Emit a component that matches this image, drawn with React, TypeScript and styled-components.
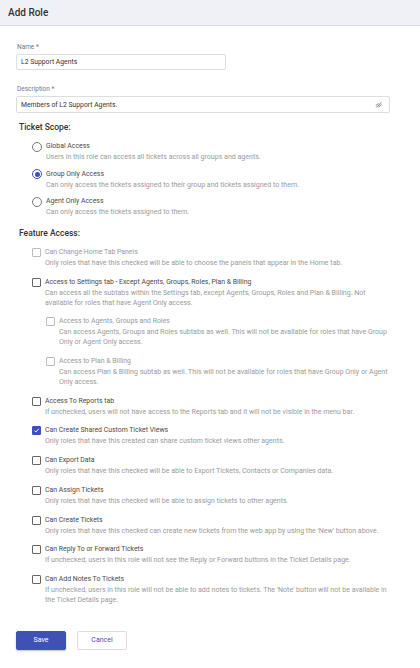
import React from "react";
import styled, { createGlobalStyle } from "styled-components";

const Primary = "#3f51b5";

const GlobalStyle = createGlobalStyle`
  body {
    margin: 0;
    background: #fff;
    font-family: Roboto, "Liberation Sans", sans-serif;
    color: #444;
  }
`;

const Header = styled.div`
  height: 26px;
  box-sizing: border-box;
  display: flex;
  align-items: center;
  padding-left: 8px;
  background: #f0f1f6;
  border-bottom: 1px solid #d9dbec;
  font-size: 10px;
  font-weight: 500;
  color: #333;
`;

const Form = styled.div`
  padding: 17px 16px 20px;
  display: flex;
  flex-direction: column;
`;

const Label = styled.div`
  font-size: 6.5px;
  line-height: 9px;
  color: #777;
  margin-left: 1px;
  margin-bottom: 2px;
`;

const Field = styled.div<{ width: number; height: number }>`
  width: ${({ width }) => width}px;
  height: ${({ height }) => height}px;
  box-sizing: border-box;
  border: 1px solid #ddd;
  border-radius: 2px;
  display: flex;
  align-items: center;
  justify-content: space-between;
  padding: 0 7px 0 4px;
  font-size: 6.8px;
  color: #333;
  margin-bottom: 15px;
`;

const Heading = styled.div<{ top: number }>`
  margin: ${({ top }) => top}px 0 0 3px;
  font-size: 8.5px;
  line-height: 12px;
  font-weight: 500;
  color: #333;
`;

const List = styled.div<{ gap: number; top: number }>`
  display: flex;
  flex-direction: column;
  gap: ${({ gap }) => gap}px;
  margin: ${({ top }) => top}px 0 0 16px;
`;

const Item = styled.div<{ nested?: boolean }>`
  display: flex;
  align-items: flex-start;
  gap: 4px;
  margin-left: ${({ nested }) => (nested ? 14 : 0)}px;
`;

const Radio = styled.span<{ checked?: boolean }>`
  width: 10px;
  height: 10px;
  box-sizing: border-box;
  border-radius: 50%;
  border: 1px solid ${({ checked }) => (checked ? Primary : "#777")};
  display: flex;
  align-items: center;
  justify-content: center;
  margin-top: 0.5px;
  flex-shrink: 0;
  &::after {
    content: "";
    width: 5px;
    height: 5px;
    border-radius: 50%;
    background: ${({ checked }) => (checked ? Primary : "transparent")};
  }
`;

const Box = styled.span<{ checked?: boolean; disabled?: boolean }>`
  width: 9px;
  height: 9px;
  box-sizing: border-box;
  border-radius: 1px;
  border: 1px solid
    ${({ checked, disabled }) =>
      checked ? Primary : disabled ? "#bbb" : "#666"};
  background: ${({ checked }) => (checked ? Primary : "#fff")};
  display: flex;
  align-items: center;
  justify-content: center;
  margin-top: 1px;
  flex-shrink: 0;
`;

const Texts = styled.div<{ nested?: boolean }>`
  display: flex;
  flex-direction: column;
  max-width: ${({ nested }) => (nested ? 332 : 344)}px;
`;

const Title = styled.div<{ disabled?: boolean }>`
  font-size: 6.9px;
  line-height: 11px;
  color: ${({ disabled }) => (disabled ? "#999" : "#4a4a4a")};
`;

const Desc = styled.div`
  font-size: 7.05px;
  line-height: 10px;
  color: #9a9a9a;
`;

const Actions = styled.div`
  display: flex;
  gap: 11px;
  margin-top: 26px;
`;

const Button = styled.button<{ primary?: boolean }>`
  width: 50px;
  height: 19px;
  border-radius: 2px;
  font-family: Roboto, "Liberation Sans", sans-serif;
  font-size: 7px;
  cursor: pointer;
  border: 1px solid ${({ primary }) => (primary ? Primary : "#ddd")};
  background: ${({ primary }) => (primary ? Primary : "#fff")};
  color: ${({ primary }) => (primary ? "#fff" : Primary)};
  box-shadow: ${({ primary }) =>
    primary ? "0 1px 2px rgba(0,0,0,0.25)" : "none"};
`;

const Check = () => (
  <svg width="7" height="7" viewBox="0 0 10 10">
    <path d="M2 5.2l2 2 4.2-4.6" fill="none" stroke="#fff" strokeWidth="1.4" />
  </svg>
);

const Resize = () => (
  <svg width="7" height="7" viewBox="0 0 10 10">
    <path d="M2 9L9 2M5 9l4-4M1.5 6.5l3-3" stroke="#555" strokeWidth="1.2" fill="none" />
  </svg>
);

const scopes = [
  {
    title: "Global Access",
    desc: "Users in this role can access all tickets across all groups and agents.",
  },
  {
    title: "Group Only Access",
    desc: "Can only access the tickets assigned to their group and tickets assigned to them.",
    checked: true,
  },
  {
    title: "Agent Only Access",
    desc: "Can only access the tickets assigned to them.",
  },
];

type Feature = {
  title: string;
  desc: string;
  checked?: boolean;
  disabled?: boolean;
  nested?: boolean;
};

const features: Feature[] = [
  {
    title: "Can Change Home Tab Panels",
    desc: "Only roles that have this checked will be able to choose the panels that appear in the Home tab.",
    disabled: true,
  },
  {
    title: "Access to Settings tab - Except Agents, Groups, Roles, Plan & Billing",
    desc: "Can access all the subtabs within the Settings tab, except Agents, Groups, Roles and Plan & Billing. Not available for roles that have Agent Only access.",
  },
  {
    title: "Access to Agents, Groups and Roles",
    desc: "Can access Agents, Groups and Roles subtabs as well. This will not be available for roles that have Group Only or Agent Only access.",
    disabled: true,
    nested: true,
  },
  {
    title: "Access to Plan & Billing",
    desc: "Can access Plan & Billing subtab as well. This will not be available for roles that have Group Only or Agent Only access.",
    disabled: true,
    nested: true,
  },
  {
    title: "Access To Reports tab",
    desc: "If unchecked, users will not have access to the Reports tab and it will not be visible in the menu bar.",
  },
  {
    title: "Can Create Shared Custom Ticket Views",
    desc: "Only roles that have this created can share custom ticket views other agents.",
    checked: true,
  },
  {
    title: "Can Export Data",
    desc: "Only roles that have this checked will be able to Export Tickets, Contacts or Companies data.",
  },
  {
    title: "Can Assign Tickets",
    desc: "Only roles that have this checked will be able to assign tickets to other agents.",
  },
  {
    title: "Can Create Tickets",
    desc: "Only roles that have this checked can create new tickets from the web app by using the 'New' button above.",
  },
  {
    title: "Can Reply To or Forward Tickets",
    desc: "If unchecked, users in this role will not see the Reply or Forward buttons in the Ticket Details page.",
  },
  {
    title: "Can Add Notes To Tickets",
    desc: "If unchecked, users in this role will not be able to add notes to tickets. The 'Note' button will not be available in the Ticket Details page.",
  },
];

export default function App() {
  return (
    <>
      <GlobalStyle />
      <Header>Add Role</Header>
      <Form>
        <Label>Name *</Label>
        <Field width={210} height={16}>
          L2 Support Agents
        </Field>
        <Label>Description *</Label>
        <Field width={374} height={17}>
          Members of L2 Support Agents.
          <Resize />
        </Field>

        <Heading top={-7}>Ticket Scope:</Heading>
        <List gap={6.5} top={8}>
          {scopes.map((s) => (
            <Item key={s.title}>
              <Radio checked={s.checked} />
              <Texts>
                <Title>{s.title}</Title>
                <Desc>{s.desc}</Desc>
              </Texts>
            </Item>
          ))}
        </List>

        <Heading top={10}>Feature Access:</Heading>
        <List gap={8.7} top={8}>
          {features.map((f) => (
            <Item key={f.title} nested={f.nested}>
              <Box checked={f.checked} disabled={f.disabled}>
                {f.checked && <Check />}
              </Box>
              <Texts nested={f.nested}>
                <Title disabled={f.disabled}>{f.title}</Title>
                <Desc>{f.desc}</Desc>
              </Texts>
            </Item>
          ))}
        </List>

        <Actions>
          <Button primary>Save</Button>
          <Button>Cancel</Button>
        </Actions>
      </Form>
    </>
  );
}
